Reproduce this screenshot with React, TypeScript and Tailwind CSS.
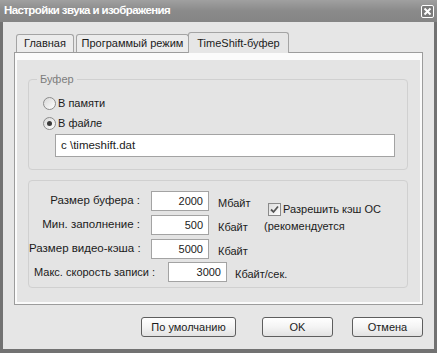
import React from 'react';

const font = { fontFamily: '"Liberation Sans", Arial, sans-serif' };

function Radio({ checked, label }: { checked?: boolean; label: string }) {
  return (
    <div className="flex items-center h-[13px]">
      <span className="w-[13px] h-[13px] rounded-full border border-[#8c8c8c] bg-gradient-to-br from-[#d8d8d8] to-white flex items-center justify-center">
        {checked && <span className="w-[5px] h-[5px] rounded-full bg-[#3a3a3a]" />}
      </span>
      <span className="ml-[2px] text-[11px] text-[#1b1b1b] leading-none">{label}</span>
    </div>
  );
}

function NumField({ value, w }: { value: string; w: string }) {
  return (
    <div className={`${w} h-[20px] bg-white border border-[#a3a3a3] flex items-center justify-end pr-[5px] text-[11px] text-[#1b1b1b]`}>
      {value}
    </div>
  );
}

function Btn({ label, w }: { label: string; w: string }) {
  return (
    <div className={`${w} h-[20px] rounded-[3px] border border-[#5e5e5e] bg-gradient-to-b from-white via-[#f4f4f4] to-[#e2e2e2] flex items-center justify-center text-[11px] text-[#1b1b1b]`}>
      {label}
    </div>
  );
}

export default function App() {
  return (
    <div style={font} className="w-[437px] h-[353px] bg-[#727272] flex flex-col overflow-hidden">
      {/* Title bar */}
      <div className="h-[22px] shrink-0 bg-gradient-to-b from-[#a0a0a0] via-[#8a8a8a] to-[#858585] flex items-center pl-[4px] pr-[3px]">
        <span className="text-white font-bold text-[11.5px] tracking-[-0.6px]">Настройки звука и изображения</span>
        <div className="ml-auto w-[13px] h-[13px] border border-white rounded-[2px] bg-[#7a7a7a] flex items-center justify-center">
          <svg width="9" height="9" viewBox="0 0 9 9">
            <path d="M1.5 1.5 L7.5 7.5 M7.5 1.5 L1.5 7.5" stroke="white" strokeWidth="2" />
          </svg>
        </div>
      </div>

      {/* Body */}
      <div className="flex-1 mx-[3px] mb-[4px] bg-[#e6e6e6] flex flex-col">
        {/* Tabs */}
        <div className="flex items-end pt-[10px] pl-[13px] h-[30px] relative z-10">
          <div className="h-[18px] w-[58px] border border-b-0 border-[#a4a4a4] rounded-t-[3px] bg-[#ececec] flex items-center justify-center text-[11px] text-[#1b1b1b]">
            Главная
          </div>
          <div className="ml-[2px] h-[18px] w-[113px] border border-b-0 border-[#a4a4a4] rounded-t-[3px] bg-[#ececec] flex items-center justify-center text-[11px] text-[#1b1b1b]">
            Программый режим
          </div>
          <div className="-ml-[1px] h-[21px] w-[101px] border border-b-0 border-[#a4a4a4] rounded-t-[3px] bg-[#e6e6e6] flex items-center justify-center text-[11px] text-[#1b1b1b] -mb-[1px]">
            TimeShift-буфер
          </div>
        </div>

        {/* Panel */}
        <div className="ml-[11px] w-[409px] h-[253px] border border-[#9c9c9c] bg-[#fbfbfb] pt-[7px] px-[2px] pb-[2px] flex flex-col">
          <div className="flex-1 bg-[#e4e4e4] px-[11px] flex flex-col">
            {/* Buffer group */}
            <div className="relative mt-[19px] w-[380px] h-[91px] border border-[#d0d0d0] rounded-[4px]">
              <span className="absolute -top-[8px] left-[8px] px-[3px] bg-[#e4e4e4] text-[11px] text-[#7c7c7c] leading-[14px]">
                Буфер
              </span>
              <div className="pl-[14px] pt-[17px] flex flex-col gap-[7px]">
                <Radio label="В памяти" />
                <Radio checked label="В файле" />
              </div>
              <div className="ml-[26px] mt-[4px] w-[340px] h-[23px] bg-white border border-[#a3a3a3] flex items-center pl-[5px] text-[11.5px] text-[#1b1b1b]">
                c \timeshift.dat
              </div>
            </div>

            {/* Sizes group */}
            <div className="mt-[10px] w-[380px] h-[108px] border border-[#d0d0d0] rounded-[4px] pt-[10px] flex flex-col">
              <div className="flex">
                <div className="w-[235px] flex flex-col gap-[4px]">
                  {[
                    ['Размер буфера :', '2000', 'Мбайт'],
                    ['Мин. заполнение :', '500', 'Кбайт'],
                    ['Размер видео-кэша :', '5000', 'Кбайт'],
                  ].map(([l, v, u]) => (
                    <div key={l} className="flex items-center h-[20px]">
                      <span className="w-[111px] text-right text-[11.5px] text-[#1b1b1b] whitespace-nowrap">{l}</span>
                      <div className="ml-[11px]">
                        <NumField value={v} w="w-[58px]" />
                      </div>
                      <span className="ml-[9px] mt-[4px] text-[11px] text-[#1b1b1b]">{u}</span>
                    </div>
                  ))}
                </div>
                <div className="pt-[11px] flex flex-col">
                  <div className="flex items-center ml-[4px]">
                    <span className="w-[13px] h-[13px] border border-[#8a8a8a] bg-gradient-to-br from-[#dcdcdc] to-white flex items-center justify-center">
                      <svg width="9" height="9" viewBox="0 0 9 9">
                        <path d="M1 4.5 L3.5 7 L8 1.5" fill="none" stroke="#555" strokeWidth="1.8" />
                      </svg>
                    </span>
                    <span className="ml-[2px] text-[11px] text-[#1b1b1b] leading-[15px]">Разрешить кэш ОС</span>
                  </div>
                  <span className="mt-[2px] text-[11px] text-[#1b1b1b] leading-[15px]">(рекомендуется</span>
                </div>
              </div>
              <div className="mt-[3px] flex items-center h-[20px] pl-[5px]">
                <span className="w-[134px] text-[11px] text-[#1b1b1b] whitespace-nowrap">Макс. скорость записи :</span>
                <NumField value="3000" w="w-[59px]" />
                <span className="ml-[8px] mt-[4px] text-[11px] text-[#1b1b1b]">Кбайт/сек.</span>
              </div>
            </div>
          </div>
        </div>

        {/* Buttons */}
        <div className="mt-[12px] flex pl-[138px] gap-[26px]">
          <Btn label="По умолчанию" w="w-[95px]" />
          <div className="flex gap-[19px]">
            <Btn label="OK" w="w-[71px]" />
            <Btn label="Отмена" w="w-[71px]" />
          </div>
        </div>
      </div>
    </div>
  );
}
